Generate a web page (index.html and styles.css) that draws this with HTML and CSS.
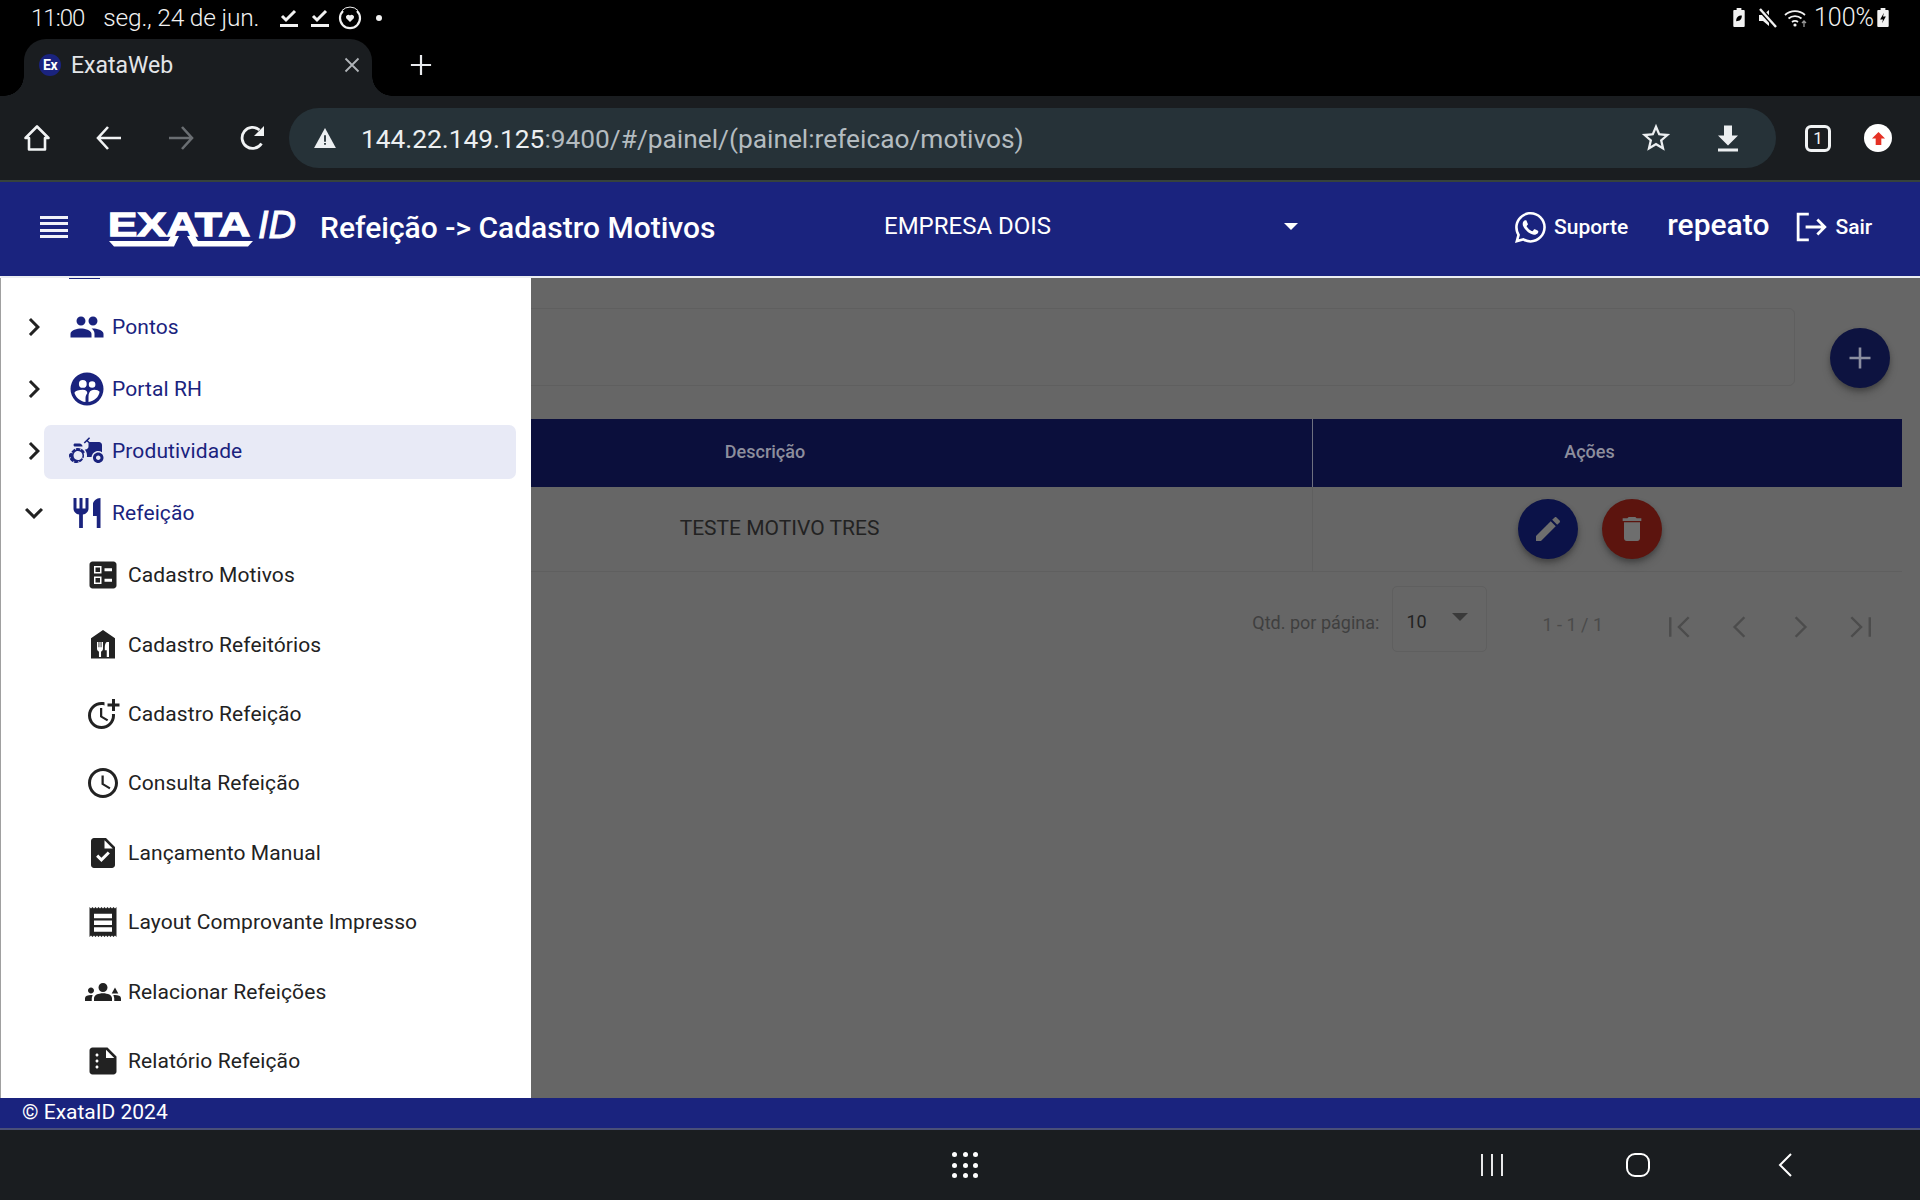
FILE: index.html
```html
<!DOCTYPE html>
<html lang="pt-BR">
<head>
<meta charset="utf-8">
<title>ExataWeb</title>
<link rel="stylesheet" href="styles.css">
</head>
<body>
<div class="device">
  <div class="statusbar">
    <div class="status-left">
      <span class="st-time">11:00</span>
      <span class="st-date">seg., 24 de jun.</span>
      <svg class="st-check" viewBox="0 0 18 18"><path d="M2 7l4 4 9-9" fill="none" stroke="currentColor" stroke-width="3"/><path d="M0 16.500h18" stroke="currentColor" stroke-width="3"/></svg>
      <svg class="st-check" viewBox="0 0 18 18"><path d="M2 7l4 4 9-9" fill="none" stroke="currentColor" stroke-width="3"/><path d="M0 16.500h18" stroke="currentColor" stroke-width="3"/></svg>
      <svg class="st-circle" viewBox="0 0 24 24"><path d="M5 5a10 10 0 1 0 14 0" fill="none" stroke="currentColor" stroke-width="2.200"/><path d="M4 4.500a11 11 0 0 1 16 0" fill="none" stroke="currentColor" stroke-width="1"/><path d="M12 16l-3.800-3.800a2.400 2.400 0 0 1 3.800-2.800 2.400 2.400 0 0 1 3.800 2.800z" fill="currentColor"/></svg>
      <span class="st-dot"></span>
    </div>
    <div class="status-right">
      <svg class="st-batt" viewBox="0 0 12 20"><path d="M3.500 0h5v2H11a1 1 0 0 1 1 1v16a1 1 0 0 1-1 1H1a1 1 0 0 1-1-1V3a1 1 0 0 1 1-1h2.500z" fill="currentColor"/><path d="M3 14c0-4 2-6 6-6 0 4-2 6-6 6z" fill="#000"/></svg>
      <svg class="st-mute" viewBox="0 0 20 20"><path d="M1 7h4l6-5v16l-6-5H1z" fill="currentColor"/><path d="M2 1l16 18" stroke="#000" stroke-width="5"/><path d="M2 1l16 18" stroke="currentColor" stroke-width="2.400"/></svg>
      <svg class="st-wifi" viewBox="0 0 24 20"><path d="M1 7a15 15 0 0 1 20 0M4.500 10.500a10 10 0 0 1 13 0M8 14a5 5 0 0 1 6 0" fill="none" stroke="currentColor" stroke-width="1.800"/><circle cx="11" cy="17" r="1.600" fill="currentColor"/><path d="M20 19v-6M18 15l2-2 2 2" fill="none" stroke="#999" stroke-width="1.300"/></svg>
      <span class="st-pct">100%</span>
      <svg class="st-batt" viewBox="0 0 12 20"><path d="M3.500 0h5v2H11a1 1 0 0 1 1 1v16a1 1 0 0 1-1 1H1a1 1 0 0 1-1-1V3a1 1 0 0 1 1-1h2.500z" fill="currentColor"/><path d="M7 5l-4 7h3l-1 4 4-7H6z" fill="#000"/></svg>
    </div>
  </div>

  <div class="tabstrip">
    <div class="tab">
      <span class="favicon">Ex</span>
      <span class="tab-title">ExataWeb</span>
      <svg class="tab-close" viewBox="0 0 16 16"><path d="M1.500 1.500l13 13M14.500 1.500l-13 13" stroke="currentColor" stroke-width="1.800"/></svg>
    </div>
    <svg class="tab-new" viewBox="0 0 24 24"><path d="M12 1v22M1 12h22" stroke="currentColor" stroke-width="2.400"/></svg>
  </div>

  <div class="toolbar">
    <div class="tool-slot"><svg class="tool-ic" viewBox="0 0 28 28"><path d="M14 2.500L2.500 14H6v11.500h16V14h3.500z" fill="none" stroke="currentColor" stroke-width="2.600" stroke-linejoin="round"/></svg></div>
    <div class="tool-slot"><svg class="tool-ic" viewBox="0 0 28 28"><path d="M13 3L3 14l10 11M3 14h23" fill="none" stroke="currentColor" stroke-width="2.600"/></svg></div>
    <div class="tool-slot tool-dim"><svg class="tool-ic" viewBox="0 0 28 28"><path d="M15 3l10 11-10 11M25 14H2" fill="none" stroke="currentColor" stroke-width="2.600"/></svg></div>
    <div class="tool-slot"><svg class="tool-ic" viewBox="0 0 28 28"><path d="M22.500 19.500A10.500 10.500 0 1 1 20.500 6" fill="none" stroke="currentColor" stroke-width="2.800"/><path d="M25 2v10H15z" fill="currentColor"/></svg></div>
    <div class="urlbar">
      <svg class="url-warn" viewBox="0 0 24 22"><path d="M12 0L24 22H0z" fill="currentColor"/><path d="M11 8h2v7h-2zM11 16.500h2v2h-2z" fill="#263238"/></svg>
      <div class="url-text"><span class="url-host">144.22.149.125</span><span class="url-rest">:9400/#/painel/(painel:refeicao/motivos)</span></div>
      <svg class="url-star" viewBox="0 0 24 24"><path d="M22 9.240l-7.190-.62L12 2 9.190 8.630 2 9.240l5.460 4.730L5.820 21 12 17.270 18.180 21l-1.630-7.030L22 9.240zM12 15.400l-3.760 2.270 1-4.280-3.320-2.880 4.380-.38L12 6.100l1.710 4.040 4.380.38-3.320 2.880 1 4.280L12 15.400z" fill="currentColor"/></svg>
      <svg class="url-down" viewBox="0 0 24 26"><path d="M8 0h8v10h6L12 20 2 10h6zM2 23h20v3H2z" fill="currentColor"/></svg>
    </div>
    <div class="tool-after">
      <div class="tab-count">1</div>
      <div class="avatar"><svg class="avatar-ic" viewBox="0 0 16 16"><path d="M8 1l7 7h-4v7H5V8H1z" fill="currentColor"/></svg></div>
    </div>
  </div>

  <header class="appbar">
    <div class="burger"><span></span><span></span><span></span><span></span></div>
    <div class="logo">
      <div class="logo-word"><span class="logo-exata">EXATA</span><span class="logo-id">ID</span></div>
      <svg class="logo-band" viewBox="0 0 146 11"><path d="M1 5H60L63 0h8l-5 10.500H6zM145 5H90l-3-5h-8l6 10.500h55z" fill="currentColor"/></svg>
    </div>
    <h1 class="app-title">Refeição -&gt; Cadastro Motivos</h1>
    <div class="company"><span>EMPRESA DOIS</span><span class="caret"></span></div>
    <div class="app-actions">
      <svg class="wa" viewBox="0 0 16 16"><path d="M13.601 2.326A7.854 7.854 0 0 0 7.994 0C3.627 0 .068 3.558.064 7.926c0 1.399.366 2.76 1.057 3.965L0 16l4.204-1.102a7.933 7.933 0 0 0 3.79.965h.004c4.368 0 7.926-3.558 7.93-7.93A7.898 7.898 0 0 0 13.6 2.326zM7.994 14.521a6.573 6.573 0 0 1-3.356-.92l-.24-.144-2.494.654.666-2.433-.156-.251a6.56 6.56 0 0 1-1.007-3.505c0-3.626 2.957-6.584 6.591-6.584a6.56 6.56 0 0 1 4.66 1.931 6.557 6.557 0 0 1 1.928 4.66c-.004 3.639-2.961 6.592-6.592 6.592zm3.615-4.934c-.197-.099-1.17-.578-1.353-.646-.182-.065-.315-.099-.445.099-.133.197-.513.646-.627.775-.114.133-.232.148-.43.05-.197-.1-.836-.308-1.592-.985-.59-.525-.985-1.175-1.103-1.372-.114-.198-.011-.304.088-.403.087-.088.197-.232.296-.346.1-.114.133-.198.198-.33.065-.134.034-.248-.015-.347-.05-.099-.445-1.076-.612-1.47-.16-.389-.323-.335-.445-.34-.114-.007-.247-.007-.38-.007a.729.729 0 0 0-.529.247c-.182.198-.691.677-.691 1.654 0 .977.71 1.916.81 2.049.098.133 1.394 2.132 3.383 2.992.47.205.84.326 1.129.418.475.152.904.129 1.246.08.38-.058 1.171-.48 1.338-.943.164-.464.164-.86.114-.943-.049-.084-.182-.133-.38-.232z" fill="currentColor"/></svg>
      <span class="act-label act-support">Suporte</span>
      <span class="act-user">repeato</span>
      <svg class="exit" viewBox="0 0 30 28"><path d="M12 2H2v24h10" fill="none" stroke="currentColor" stroke-width="2.600"/><path d="M9 14h18M20 7l7 7-7 7" fill="none" stroke="currentColor" stroke-width="2.600"/></svg>
      <span class="act-label">Sair</span>
    </div>
  </header>

  <div class="workspace">
    <aside class="drawer">
      <div class="drawer-top"><span class="clipped-bar"></span></div>
      <div class="menu-row">
        <svg class="chev" viewBox="0 0 24 24"><path d="M8.590 16.590L13.170 12 8.590 7.410 10 6l6 6-6 6z"/></svg>
        <div class="pill"><svg class="m-ic" viewBox="0 0 24 24"><path d="M16 11c1.660 0 2.990-1.340 2.990-3S17.660 5 16 5c-1.660 0-3 1.340-3 3s1.340 3 3 3zm-8 0c1.660 0 2.990-1.340 2.990-3S9.660 5 8 5C6.340 5 5 6.340 5 8s1.340 3 3 3zm0 2c-2.330 0-7 1.170-7 3.500V19h14v-2.500c0-2.330-4.670-3.500-7-3.500zm8 0c-.290 0-.620.020-.970.050 1.160.840 1.970 1.970 1.970 3.450V19h6v-2.500c0-2.330-4.670-3.500-7-3.500z"/></svg><span>Pontos</span></div>
      </div>
      <div class="menu-row">
        <svg class="chev" viewBox="0 0 24 24"><path d="M8.590 16.590L13.170 12 8.590 7.410 10 6l6 6-6 6z"/></svg>
        <div class="pill"><svg class="m-ic" viewBox="0 0 24 24"><path fill-rule="evenodd" d="M12 1a11 11 0 1 1 0 22 11 11 0 0 1 0-22zM9.200 6a2.600 2.600 0 1 0 0 5.200 2.600 2.600 0 0 0 0-5.200zm6.200.8a2.200 2.200 0 1 0 0 4.400 2.200 2.200 0 0 0 0-4.400zM3.600 14.500c1 3.300 3.900 5.700 7.400 6.200V18c0-1.200.5-2.400 1.200-3.200 0-1.500-1-2.300-3-2.300-2.600 0-4.700.5-5.600 2zm10-.1c-.4.700-.6 1.700-.6 2.700v3.600c3.900-.4 6.800-3.300 7.400-6.800-.7-.9-1.900-1.400-3.400-1.400-1.600 0-2.900.5-3.400 1.900z"/></svg><span>Portal RH</span></div>
      </div>
      <div class="menu-row">
        <svg class="chev" viewBox="0 0 24 24"><path d="M8.590 16.590L13.170 12 8.590 7.410 10 6l6 6-6 6z"/></svg>
        <div class="pill pill-active"><svg class="m-ic" viewBox="0 0 24 24"><path d="M19.500 12c.930 0 1.780.280 2.500.760V8c0-1.100-.900-2-2-2h-6.290l-1.060-1.060 1.410-1.410-.710-.710-3.530 3.530.710.710 1.410-1.410L13 6.710V9c0 1.100-.900 2-2 2h-.540c.950 1.060 1.540 2.460 1.540 4 0 .340-.040.670-.090 1h3.140c.250-2.250 2.140-4 4.450-4zM19.500 13c-1.930 0-3.500 1.570-3.500 3.500s1.570 3.500 3.500 3.500 3.500-1.570 3.500-3.500-1.570-3.500-3.500-3.500zm0 5c-.830 0-1.500-.670-1.500-1.500s.670-1.500 1.500-1.500 1.500.670 1.500 1.500-.670 1.500-1.500 1.500zM4 9h5c0-1.100-.900-2-2-2H4c-.550 0-1 .450-1 1s.450 1 1 1zm5.830 4.820l-.180-.470.930-.350c-.460-1.060-1.280-1.910-2.310-2.430l-.400.890-.460-.210.400-.900C7.260 10.130 6.640 10 6 10c-.530 0-1.040.110-1.520.260l.340.910-.470.180L4 10.420c-1.060.460-1.910 1.280-2.430 2.310l.890.400-.210.460-.900-.400C.130 13.740 0 14.360 0 15c0 .530.110 1.040.26 1.520l.910-.340.180.470-.930.350c.460 1.060 1.280 1.910 2.310 2.430l.400-.890.460.210-.400.900c.550.220 1.170.350 1.810.350.530 0 1.040-.110 1.520-.260l-.340-.910.470-.180.350.930c1.060-.460 1.910-1.280 2.430-2.310l-.890-.400.210-.460.900.400c.220-.550.350-1.170.350-1.810 0-.530-.110-1.040-.26-1.520l-.910.340zm-2.680 3.950c-1.530.630-3.290-.090-3.920-1.620-.630-1.530.090-3.290 1.620-3.920 1.530-.630 3.290.090 3.920 1.620.640 1.530-.090 3.290-1.620 3.920z"/></svg><span>Produtividade</span></div>
      </div>
      <div class="menu-row">
        <svg class="chev" viewBox="0 0 24 24"><path d="M7.410 8.590L12 13.170l4.590-4.580L18 10l-6 6-6-6z"/></svg>
        <div class="pill"><svg class="m-ic" viewBox="0 0 24 24"><path d="M11 9H9V2H7v7H5V2H3v7c0 2.120 1.660 3.840 3.750 3.970V22h2.500v-9.030C11.340 12.840 13 11.120 13 9V2h-2v7zm5-3v8h2.500v8H21V2c-2.760 0-5 2.240-5 4z"/></svg><span>Refeição</span></div>
      </div>
      <div class="sub-list">
        <div class="sub-row"><svg class="s-ic" viewBox="0 0 24 24"><path fill-rule="evenodd" d="M13 9.500h5v-2h-5v2zm0 7h5v-2h-5v2zm6 4.500H5c-1.100 0-2-.900-2-2V5c0-1.100.900-2 2-2h14c1.100 0 2 .900 2 2v14c0 1.100-.900 2-2 2zM6 11h5V6H6v5zm1-4h3v3H7V7zM6 18h5v-5H6v5zm1-4h3v3H7v-3z"/></svg><span>Cadastro Motivos</span></div>
        <div class="sub-row"><svg class="s-ic" viewBox="0 0 24 24"><path fill-rule="evenodd" d="M12 2l8 5.500V21H4V7.500zM8 10v4.500c0 1 .6 1.700 1.300 1.900V20h1.400v-3.600c.7-.2 1.300-.9 1.300-1.900V10h-1v3.500h-.6V10H9.600v3.500H9V10zm6.500 0c-.8.600-1.300 1.800-1.300 3.500v2H14.500V20H16V10z"/></svg><span>Cadastro Refeitórios</span></div>
        <div class="sub-row"><svg class="s-ic" viewBox="0 0 24 24"><path d="M10 8v6l4.700 2.900.8-1.200-4-2.400V8z M17.920 12A6.957 6.957 0 0 1 18 13c0 3.900-3.100 7-7 7s-7-3.100-7-7 3.100-7 7-7c.700 0 1.370.100 2 .290V4.230c-.640-.150-1.310-.230-2-.230-5 0-9 4-9 9s4 9 9 9 9-4 9-9c0-.340-.020-.670-.060-1h-2.020z M20 5V2h-2v3h-3v2h3v3h2V7h3V5z"/></svg><span>Cadastro Refeição</span></div>
        <div class="sub-row"><svg class="s-ic" viewBox="0 0 24 24"><path d="M11.990 2C6.470 2 2 6.480 2 12s4.470 10 9.990 10C17.520 22 22 17.520 22 12S17.520 2 11.990 2zM12 20c-4.420 0-8-3.580-8-8s3.580-8 8-8 8 3.580 8 8-3.580 8-8 8zm.5-13H11v6l5.250 3.150.750-1.230-4.500-2.670z"/></svg><span>Consulta Refeição</span></div>
        <div class="sub-row"><svg class="s-ic" viewBox="0 0 24 24"><path d="M14 2H6c-1.100 0-1.990.900-1.990 2L4 20c0 1.100.890 2 1.990 2H18c1.100 0 2-.900 2-2V8l-6-6zm-3.060 16L7.400 14.460l1.410-1.410 2.120 2.120 4.240-4.240 1.410 1.410L10.940 18zM13 9V3.500L18.500 9H13z"/></svg><span>Lançamento Manual</span></div>
        <div class="sub-row"><svg class="s-ic" viewBox="0 0 24 24"><path fill-rule="evenodd" d="M3 2l1 1 1-1 1 1 1-1 1 1 1-1 1 1 1-1 1 1 1-1 1 1 1-1 1 1 1-1 1 1 1-1 1 1 1-1v20l-1-1-1 1-1-1-1 1-1-1-1 1-1-1-1 1-1-1-1 1-1-1-1 1-1-1-1 1-1-1-1 1-1-1-1 1zM6 6.500v3h12v-3zm0 4.500v3h12v-3zm0 4.500v3h12v-3z"/></svg><span>Layout Comprovante Impresso</span></div>
        <div class="sub-row"><svg class="s-ic" viewBox="0 0 24 24"><path d="M12 12.750c1.630 0 3.070.390 4.240.900 1.080.480 1.760 1.560 1.760 2.730V18H6v-1.610c0-1.180.680-2.260 1.760-2.730 1.170-.520 2.610-.910 4.240-.910zM4 13c1.100 0 2-.900 2-2s-.900-2-2-2-2 .900-2 2 .900 2 2 2zm1.130 1.100C4.760 14.040 4.390 14 4 14c-.990 0-1.930.210-2.780.580C.480 14.900 0 15.620 0 16.430V18h4.500v-1.610c0-.830.230-1.610.630-2.290zM20 9l2.200 4h-4.400zm4 7.430c0-.810-.480-1.530-1.220-1.850C21.930 14.210 20.990 14 20 14c-.390 0-.760.040-1.130.100.400.680.630 1.460.630 2.290V18H24v-1.570zM12 6c1.660 0 3 1.340 3 3s-1.340 3-3 3-3-1.340-3-3 1.340-3 3-3z"/></svg><span>Relacionar Refeições</span></div>
        <div class="sub-row"><svg class="s-ic" viewBox="0 0 24 24"><path d="M15 3H5c-1.100 0-1.990.900-1.990 2L3 19c0 1.100.890 2 1.990 2H19c1.100 0 2-.900 2-2V9l-6-6zM8 17c-.550 0-1-.450-1-1s.450-1 1-1 1 .450 1 1-.450 1-1 1zm0-4c-.550 0-1-.450-1-1s.450-1 1-1 1 .450 1 1-.450 1-1 1zm0-4c-.550 0-1-.450-1-1s.450-1 1-1 1 .450 1 1-.450 1-1 1zm6 1V4.500l5.500 5.500H14z"/></svg><span>Relatório Refeição</span></div>
      </div>
    </aside>

    <main class="content">
      <div class="filter-row">
        <div class="filter-card"></div>
        <button class="fab fab-add"><svg class="fab-ic" viewBox="0 0 24 24"><path d="M12 1.500v21M1.500 12h21" stroke="currentColor" stroke-width="2.600"/></svg></button>
      </div>
      <div class="table">
        <div class="t-head">
          <div class="t-cell t-main">Descrição</div>
          <div class="t-cell t-act">Ações</div>
        </div>
        <div class="t-row">
          <div class="t-cell t-main t-value">TESTE MOTIVO TRES</div>
          <div class="t-cell t-act t-btns">
            <button class="fab fab-edit"><svg class="act-ic" viewBox="0 0 24 24"><path d="M3 17.250V21h3.750L17.810 9.940l-3.750-3.750L3 17.250zM20.710 7.040c.390-.390.390-1.020 0-1.410l-2.340-2.340c-.390-.390-1.020-.390-1.410 0l-1.830 1.830 3.750 3.750 1.830-1.830z"/></svg></button>
            <button class="fab fab-del"><svg class="act-ic" viewBox="0 0 24 24"><path d="M6 19c0 1.100.900 2 2 2h8c1.100 0 2-.900 2-2V7H6v12zM19 4h-3.500l-1-1h-5l-1 1H5v2h14V4z"/></svg></button>
          </div>
        </div>
      </div>
      <div class="pager">
        <span class="pg-label">Qtd. por página:</span>
        <div class="pg-select"><span>10</span><span class="pg-caret"></span></div>
        <span class="pg-range">1 - 1 / 1</span>
        <div class="pg-nav">
          <svg class="pg-ic" viewBox="0 0 24 24"><path d="M3 3v18M20 3l-9 9 9 9" fill="none" stroke="currentColor" stroke-width="2.200"/></svg>
          <svg class="pg-ic" viewBox="0 0 24 24"><path d="M16 3l-9 9 9 9" fill="none" stroke="currentColor" stroke-width="2.200"/></svg>
          <svg class="pg-ic" viewBox="0 0 24 24"><path d="M8 3l9 9-9 9" fill="none" stroke="currentColor" stroke-width="2.200"/></svg>
          <svg class="pg-ic" viewBox="0 0 24 24"><path d="M21 3v18M4 3l9 9-9 9" fill="none" stroke="currentColor" stroke-width="2.200"/></svg>
        </div>
      </div>
    </main>
  </div>

  <footer class="appfooter">© ExataID 2024</footer>

  <nav class="navbar">
    <div class="nav-dots"><i></i><i></i><i></i><i></i><i></i><i></i><i></i><i></i><i></i></div>
    <svg class="nav-ic nav-lines" viewBox="0 0 24 24"><path d="M2 1v22M12 1v22M22 1v22" stroke="currentColor" stroke-width="1.800"/></svg>
    <svg class="nav-ic nav-home" viewBox="0 0 24 24"><rect x="1" y="1" width="22" height="22" rx="8" fill="none" stroke="currentColor" stroke-width="2"/></svg>
    <svg class="nav-ic nav-back" viewBox="0 0 24 24"><path d="M18 1L7 12l11 11" fill="none" stroke="currentColor" stroke-width="2"/></svg>
  </nav>
</div>
</body>
</html>
```

FILE: styles.css
```css
* { box-sizing: border-box; }
html, body { margin: 0; padding: 0; }
body { font-family: Roboto, "Liberation Sans", sans-serif; background: #000; overflow: hidden; }
svg { display: block; flex: none; fill: currentColor; }

.device { width: 1920px; height: 1200px; display: flex; flex-direction: column; overflow: hidden; }

/* Status bar */
.statusbar { height: 39px; background: #000; color: #f2f2f2; display: flex; justify-content: space-between; align-items: center; padding: 0 31px 4px; flex: none; }
.status-left, .status-right { display: flex; align-items: center; }
.st-time { font-size: 24px; font-weight: 300; letter-spacing: -1px; }
.st-date { font-size: 24.500px; font-weight: 300; margin-left: 19px; letter-spacing: -.2px; }
.st-check { width: 18px; height: 18px; margin-left: 21px; }
.st-check + .st-check { margin-left: 13px; }
.st-circle { width: 24px; height: 24px; margin-left: 9px; }
.st-dot { width: 6px; height: 6px; border-radius: 50%; background: #f2f2f2; margin-left: 14px; }
.st-batt { width: 12px; height: 19px; }
.st-mute { width: 20px; height: 20px; margin-left: 13px; }
.st-wifi { width: 24px; height: 20px; margin-left: 6px; }
.st-pct { font-size: 25px; font-weight: 300; margin-left: 6px; margin-right: 3px; }

/* Tab strip */
.tabstrip { height: 57px; background: #000; display: flex; align-items: center; color: #e8eaed; flex: none; }
.tab { width: 348px; height: 57px; margin-left: 24px; background: #1a1d20; border-radius: 22px 22px 0 0; display: flex; align-items: center; padding: 0 0 5px 15px; position: relative; }
.tab::before, .tab::after { content: ""; position: absolute; bottom: 0; width: 20px; height: 20px; }
.tab::before { left: -20px; background: radial-gradient(circle at 0 0, #000 19.5px, #1a1d20 20px); }
.tab::after { right: -20px; background: radial-gradient(circle at 100% 0, #000 19.5px, #1a1d20 20px); }
.favicon { width: 22px; height: 22px; border-radius: 50%; background: #1a237e; color: #fff; font-size: 14px; font-weight: 700; display: flex; align-items: center; justify-content: center; letter-spacing: -.5px; }
.tab-title { font-size: 23px; margin-left: 10px; flex: 1; color: #e3e5e8; }
.tab-close { width: 16px; height: 16px; margin-right: 12px; color: #b0b4b8; }
.tab-new { width: 22px; height: 22px; margin: 0 0 5px 38px; color: #e8eaed; }

/* Browser toolbar */
.toolbar { height: 86px; background: #1a1d20; border-bottom: 2px solid #36423c; display: flex; align-items: center; padding-left: 1px; color: #f1f3f4; flex: none; }
.tool-slot { width: 72px; display: flex; justify-content: center; }
.tool-dim { color: #6a6e72; }
.tool-ic { width: 28px; height: 28px; }
.urlbar { width: 1487px; height: 60px; border-radius: 30px; background: #263238; display: flex; align-items: center; padding: 0 36px 0 25px; }
.url-warn { width: 22px; height: 20px; color: #eceff1; }
.url-text { font-size: 26.300px; margin: 2px 0 0 25px; flex: 1; white-space: nowrap; }
.url-host { color: #eceff1; }
.url-rest { color: #b4bcc0; }
.url-star { width: 34px; height: 34px; margin-right: -7px; color: #eceff1; }
.url-down { width: 24px; height: 27px; margin-left: 50px; color: #eceff1; }
.tool-after { display: flex; align-items: center; margin-left: 29px; }
.tab-count { width: 26px; height: 27px; border: 3px solid #f1f3f4; border-radius: 6px; font-size: 17px; display: flex; align-items: center; justify-content: center; }
.avatar { width: 28px; height: 28px; border-radius: 50%; background: #fff; color: #e53125; display: flex; align-items: center; justify-content: center; margin-left: 33px; }
.avatar-ic { width: 15px; height: 15px; }

/* App bar */
.appbar { height: 96px; background: #1a237e; border-bottom: 2px solid #eceef2; display: flex; align-items: center; padding: 0 0 4px 40px; color: #fff; flex: none; }
.burger { width: 28px; display: flex; flex-direction: column; gap: 3.500px; }
.burger span { height: 3px; background: #f0f1f8; display: block; }
.logo { width: 190px; margin: 5px 0 0 40px; height: 35px; flex: none; }
.logo-word { display: flex; align-items: flex-start; height: 24px; white-space: nowrap; }
.logo-exata { font-family: "Liberation Sans", sans-serif; font-weight: 700; font-size: 34px; line-height: 24px; width: 150px; flex: none; display: block; transform: scaleX(1.290); transform-origin: left center; -webkit-text-stroke: 1.300px #fff; }
.logo-id { font-family: "Liberation Sans", sans-serif; font-style: italic; font-size: 38px; line-height: 24px; margin-top: 1px; -webkit-text-stroke: 1px #fff; }
.logo-band { width: 146px; height: 11px; color: #fff; }
.app-title { font-size: 30px; font-weight: 500; margin: 0 0 0 22px; width: 564px; flex: none; white-space: nowrap; }
.company { width: 414px; flex: none; display: flex; align-items: center; font-size: 24px; margin-top: -2px; }
.company span:first-child { flex: 1; }
.caret { width: 0; height: 0; border-left: 7px solid transparent; border-right: 7px solid transparent; border-top: 7px solid #fff; }
.app-actions { display: flex; align-items: center; }
.wa { width: 31px; height: 31px; margin-left: 217px; }
.act-label { font-size: 21px; font-weight: 500; }
.act-support { margin-left: 8px; }
.act-user { font-size: 30px; font-weight: 500; margin-left: 39px; margin-top: -5px; }
.exit { width: 32px; height: 30px; margin-left: 27px; }
.act-label:last-child { margin-left: 7px; }

/* Workspace */
.workspace { flex: 1; display: flex; overflow: hidden; min-height: 0; background: #666; }
.drawer { width: 531px; flex: none; background: #fff; border-left: 1px solid #a0a0a0; overflow: hidden; }
.drawer-top { height: 18px; }
.clipped-bar { display: block; width: 31px; height: 1px; background: #1a237e; margin-left: 68px; }
.menu-row { height: 62px; display: flex; align-items: center; }
.chev { width: 36px; height: 36px; margin-left: 15px; margin-right: -8px; color: #222; fill: #222; }
.pill { flex: 1; height: 54px; margin-right: 15px; border-radius: 7px; display: flex; align-items: center; padding-left: 25px; color: #1a237e; font-size: 21px; font-weight: 450; letter-spacing: .1px; }
.pill-active { background: #e8eaf6; margin-top: 2px; padding-bottom: 2px; }
.m-ic { width: 36px; height: 36px; margin-right: 7px; }
.sub-list { margin-top: -3.500px; }
.sub-row { height: 69.400px; display: flex; align-items: center; padding-left: 84px; color: #222; font-size: 21px; font-weight: 450; letter-spacing: .1px; }
.s-ic { width: 36px; height: 36px; margin-right: 7px; }

/* Content */
.content { flex: 1; min-width: 0; overflow: hidden; color: #222; }
.filter-row { display: flex; align-items: flex-start; margin-top: 30px; padding-right: 30px; }
.filter-card { flex: 1; height: 78px; margin-left: -20px; margin-right: 35px; border: 1px solid #5f5f5f; border-radius: 6px; }
.fab { width: 60px; height: 60px; border-radius: 50%; border: 0; padding: 0; display: flex; align-items: center; justify-content: center; box-shadow: 0 3px 5px rgba(0,0,0,.25), 0 6px 10px rgba(0,0,0,.14); color: #7a7a7a; flex: none; }
.fab-add { background: #0d1340; color: #8b8ea0; margin-top: 20px; margin-bottom: -2px; }
.fab-ic { width: 24px; height: 24px; }
.table { margin: 33px 18px 0 -313px; }
.t-head { height: 68px; background: #0b0f3c; display: flex; color: #8d8e9d; font-size: 18px; font-weight: 500; padding-bottom: 0; }
.t-head .t-cell { padding-bottom: 4px; }
.t-row { height: 85px; display: flex; border-bottom: 1px solid #5f5f5f; font-size: 21px; }
.t-cell { display: flex; align-items: center; justify-content: center; }
.t-main { width: 1094px; flex: none; }
.t-act { flex: 1; padding-right: 36px; border-left: 1px solid #6e7080; }
.t-row .t-act { border-left-color: #5f5f5f; }
.t-value { padding: 0 0 2px 29px; color: #222; }
.t-btns { gap: 24px; }
.fab-edit { background: #0b1248; color: #6e6e6e; }
.fab-del { background: #5c140e; color: #6e6e6e; }
.act-ic { width: 32px; height: 32px; }
.pager { display: flex; align-items: center; justify-content: flex-end; margin: 14px 30px 0 0; }
.pg-label { font-size: 18px; color: #3f3f3f; margin-top: 7px; }
.pg-select { width: 95px; height: 66px; border: 1px solid #5f5f5f; border-radius: 5px; margin-left: 13px; display: flex; align-items: center; padding: 5px 0 0 13px; position: relative; font-size: 18px; color: #222; }
.pg-caret { position: absolute; right: 18px; top: 26px; border-left: 8px solid transparent; border-right: 8px solid transparent; border-top: 8px solid #3a3a3a; }
.pg-range { font-size: 18px; color: #4a4a4a; margin-left: 55px; margin-top: 11px; }
.pg-nav { display: flex; margin-left: 47px; color: #4c4c4c; margin-top: 15px; }
.pg-ic { width: 60px; height: 26px; }

/* Footer + nav */
.appfooter { height: 32px; background: #1a237e; border-bottom: 2px solid #4a4f78; color: #fff; font-size: 21px; padding: 0 0 2px 22px; display: flex; align-items: center; flex: none; }
.navbar { height: 70px; background: #1a1d20; display: flex; align-items: center; color: #fff; flex: none; padding-left: 952px; }
.nav-dots { width: 26px; display: grid; grid-template-columns: repeat(3, 5px); gap: 5.500px 5.500px; }
.nav-dots i { width: 5px; height: 5px; border-radius: 50%; background: #fff; display: block; }
.nav-ic { width: 24px; height: 24px; }
.nav-lines { margin-left: 502px; }
.nav-home { margin-left: 122px; }
.nav-back { margin-left: 123px; }
```
